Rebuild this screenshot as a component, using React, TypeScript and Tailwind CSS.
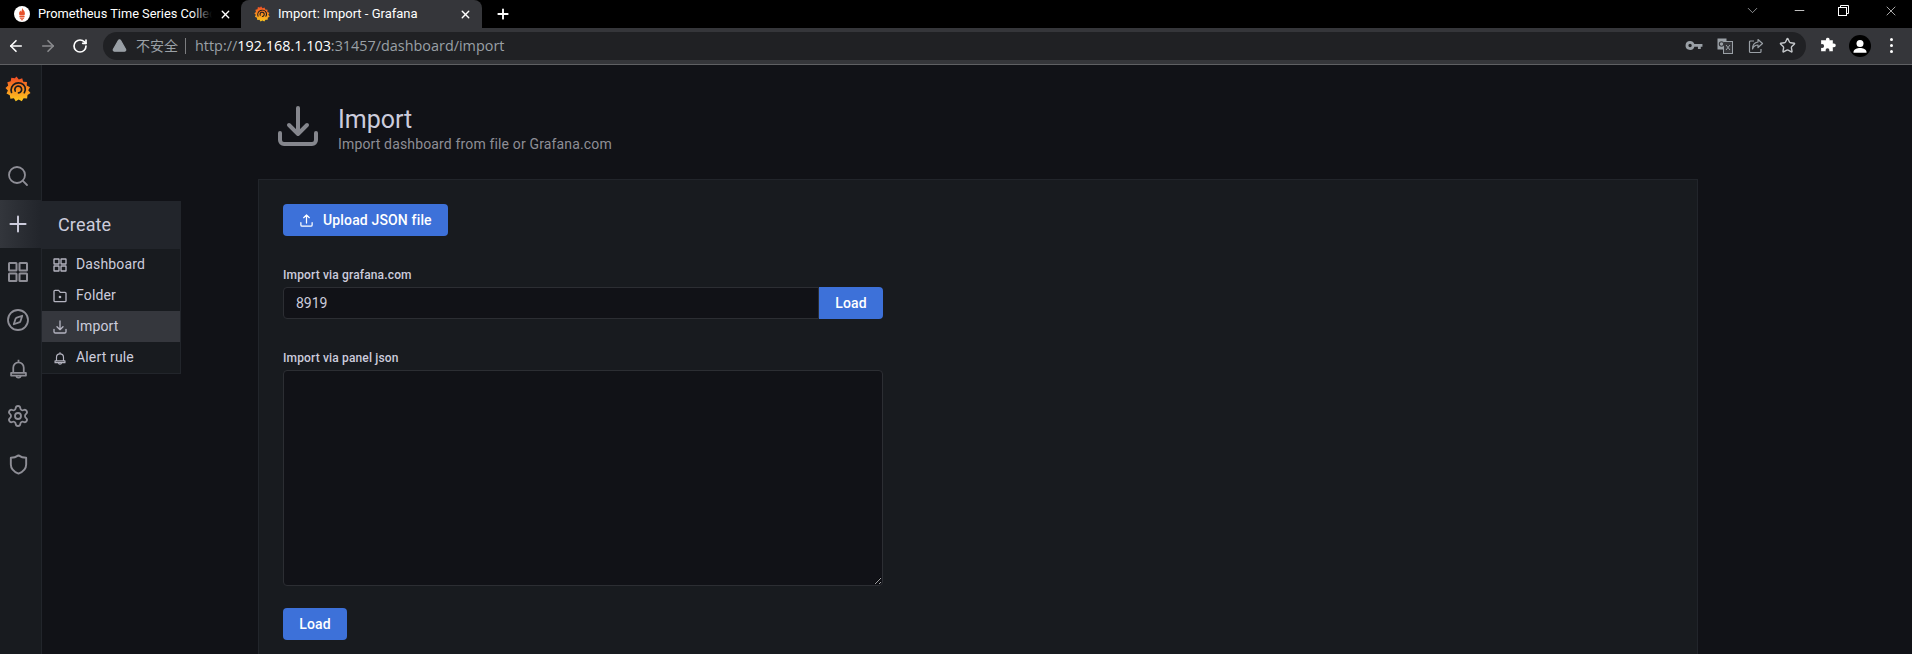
import React from 'react';
import {
  ArrowLeft,
  ArrowRight,
  ChevronDown,
  Compass,
  Minus,
  Plus,
  RotateCw,
  Search,
  Settings,
  Star,
  TriangleAlert,
  X,
} from 'lucide-react';

type IconProps = { className?: string };

const GrafanaLogo: React.FC<IconProps & { id: string }> = ({ className, id }) => (
  <svg viewBox="0 0 26 26" className={className}>
    <defs>
      <linearGradient id={id} x1="0.5" y1="1" x2="0.5" y2="0">
        <stop offset="0" stopColor="#fcc81f" />
        <stop offset="0.55" stopColor="#f9861f" />
        <stop offset="1" stopColor="#ef4a27" />
      </linearGradient>
    </defs>
    <path
      fill={`url(#${id})`}
      d="M11.500 0.500l2.300 3 3.400-1.200 1 3.400 3.800.2-.3 3.600 3.300 1.700-1.800 3 2.300 2.700-3 2-.4 3.600-3.500-.3-1.800 3-3.100-1.700-3 1.800-1.800-3-3.500.4-.6-3.500-3.300-1.600 1.400-3.200-2.400-2.500 2.700-2.300-.9-3.400 3.400-1 .6-3.500 3.500.6z"
    />
    <path d="M6.500 16.500A7.300 7.300 0 0 1 20 11c.6 2 .3 4-.7 5.700" fill="none" stroke="#181b1f" strokeWidth="1.700" strokeLinecap="round" />
    <path d="M10.200 15a3.400 3.400 0 1 1 3.300 1.900" fill="none" stroke="#181b1f" strokeWidth="1.700" strokeLinecap="round" />
  </svg>
);

const PrometheusLogo: React.FC<IconProps> = ({ className }) => (
  <svg viewBox="0 0 16 16" className={className}>
    <circle cx="8" cy="8" r="8" fill="#fff" />
    <path
      fill="#e6522c"
      d="M8 1.800c.5 1.700 2.900 3 2.900 5.600 0 .9-.3 1.500-.7 2H5.800c-.4-.5-.7-1.100-.7-2C5.100 6 6 5.500 6.300 4.500 6.800 5 7 5.500 7.100 6c.7-1 1.100-2.500.9-4.200zM5.400 10.100h5.200v1.100H5.400zM5.900 11.800h4.200v1H5.900zM6.900 13.300h2.200v.9H6.900z"
    />
  </svg>
);

const GridIcon: React.FC<IconProps> = ({ className }) => (
  <svg viewBox="0 0 24 24" fill="none" stroke="currentColor" strokeWidth="2" className={className}>
    <rect x="3" y="3" width="7.500" height="7.500" rx="0.5" />
    <rect x="13.500" y="3" width="7.500" height="7.500" rx="0.5" />
    <rect x="3" y="13.500" width="7.500" height="7.500" rx="0.5" />
    <rect x="13.500" y="13.500" width="7.500" height="7.500" rx="0.5" />
  </svg>
);

const BellIcon: React.FC<IconProps> = ({ className }) => (
  <svg viewBox="0 0 24 24" fill="none" stroke="currentColor" strokeWidth="2" strokeLinejoin="round" className={className}>
    <path d="M12 2v2M6 17V11a6 6 0 0 1 12 0v6" />
    <path d="M3.500 17h17v3h-17z" />
    <path d="M9.500 20a2.500 2.500 0 0 0 5 0" />
  </svg>
);

const ShieldIcon: React.FC<IconProps> = ({ className }) => (
  <svg viewBox="0 0 24 24" fill="none" stroke="currentColor" strokeWidth="2" strokeLinejoin="round" className={className}>
    <path d="M12 2.500c2.500 1.700 5 2.500 8 2.500v7c0 4.500-3 7.500-8 9.500-5-2-8-5-8-9.500V5c3 0 5.500-.8 8-2.500z" />
  </svg>
);

const ImportIcon: React.FC<IconProps> = ({ className }) => (
  <svg viewBox="0 0 24 24" fill="none" stroke="currentColor" strokeWidth="2" strokeLinecap="round" strokeLinejoin="round" className={className}>
    <path d="M12 3v13M7.500 11.500L12 16l4.500-4.500" />
    <path d="M3 15.500v3.500a2 2 0 0 0 2 2h14a2 2 0 0 0 2-2v-3.500" />
  </svg>
);

const UploadIcon: React.FC<IconProps> = ({ className }) => (
  <svg viewBox="0 0 24 24" fill="none" stroke="currentColor" strokeWidth="2" strokeLinecap="round" strokeLinejoin="round" className={className}>
    <path d="M12 16V3M7.500 7.500L12 3l4.500 4.500" />
    <path d="M3 15.500v3.500a2 2 0 0 0 2 2h14a2 2 0 0 0 2-2v-3.500" />
  </svg>
);

const FolderIcon: React.FC<IconProps> = ({ className }) => (
  <svg viewBox="0 0 24 24" fill="none" stroke="currentColor" strokeWidth="2" strokeLinejoin="round" className={className}>
    <path d="M3 5a1.500 1.500 0 0 1 1.500-1.500H10l2.500 3h7A1.500 1.500 0 0 1 21 8v11a1.500 1.500 0 0 1-1.500 1.500h-15A1.500 1.500 0 0 1 3 19z" />
    <circle cx="12" cy="13.500" r="1" fill="currentColor" />
  </svg>
);

const KeyIcon: React.FC<IconProps> = ({ className }) => (
  <svg viewBox="0 0 16 16" fill="currentColor" className={className}>
    <path d="M4.500 3.500a4 4 0 0 1 3.800 2.700H15.500v2.500h-1.500v2h-2.500v-2H8.300A4 4 0 1 1 4.500 3.500zm0 2.500a1.500 1.500 0 1 0 0 3 1.500 1.500 0 0 0 0-3z" />
  </svg>
);

const TranslateIcon: React.FC<IconProps> = ({ className }) => (
  <svg viewBox="0 0 16 16" className={className}>
    <rect x="0.500" y="0.500" width="9" height="11" fill="#9aa0a6" />
    <rect x="6.500" y="3.500" width="9" height="12" fill="#35363a" stroke="#9aa0a6" />
    <circle cx="4.500" cy="6" r="2.200" fill="none" stroke="#35363a" strokeWidth="1.100" />
    <path d="M9 7l4 5M13 7l-4 5" stroke="#9aa0a6" />
  </svg>
);

const ShareIcon: React.FC<IconProps> = ({ className }) => (
  <svg viewBox="0 0 16 16" fill="none" stroke="currentColor" strokeWidth="1.200" className={className}>
    <path d="M6 3H2.500A1 1 0 0 0 1.500 4v9.500a1 1 0 0 0 1 1H12a1 1 0 0 0 1-1V11" />
    <path d="M10 1.500L14.500 5.500 10 9.500V7C7 7 5.500 8.500 4.500 11c0-4 2-6.500 5.500-7z" strokeLinejoin="round" />
  </svg>
);

const PuzzleIcon: React.FC<IconProps> = ({ className }) => (
  <svg viewBox="0 0 16 16" fill="currentColor" className={className}>
    <path d="M6.500 2a1.800 1.800 0 0 1 3.500 0c0 .3-.1.600-.2 1h3.200v3.300c.3-.2.600-.3 1-.3a1.800 1.800 0 0 1 0 3.600c-.4 0-.7-.1-1-.3V13.500H9.500c.2-.3.300-.6.300-1a1.800 1.800 0 0 0-3.600 0c0 .4.100.7.300 1H2V10c.3.200.6.300 1 .3a1.800 1.800 0 0 0 0-3.600c-.4 0-.7.100-1 .3V3h4.700c-.1-.4-.2-.7-.2-1z" />
  </svg>
);

const AvatarIcon: React.FC<IconProps> = ({ className }) => (
  <svg viewBox="0 0 22 22" className={className}>
    <circle cx="11" cy="11" r="11" fill="#000" />
    <circle cx="11" cy="8.500" r="3.500" fill="#fff" />
    <path d="M4.500 17c0-2.800 3.800-4 6.500-4s6.500 1.200 6.500 4v.8h-13z" fill="#fff" />
  </svg>
);

const RestoreIcon: React.FC<IconProps> = ({ className }) => (
  <svg viewBox="0 0 11 11" fill="none" stroke="currentColor" strokeWidth="1" className={className}>
    <rect x="0.500" y="2.500" width="8" height="8" />
    <path d="M2.500 2.500v-2h8v8h-2" />
  </svg>
);

const TabBar: React.FC = () => (
  <div className="flex h-[28px] items-stretch bg-black text-white">
    <div className="flex w-[241px] items-center pl-[14px] pr-[9px]">
      <PrometheusLogo className="h-4 w-4 shrink-0" />
      <span className="relative ml-[8px] w-[175px] overflow-hidden whitespace-nowrap text-[12.800px]">
        Prometheus Time Series Collection
        <span className="absolute inset-y-0 right-0 w-[20px] bg-gradient-to-r from-transparent to-black" />
      </span>
      <X className="ml-[7px] h-[13px] w-[13px]" strokeWidth={2.5} />
    </div>
    <div className="flex w-[241px] items-center rounded-t-lg bg-[#35363a] pl-[13px] pr-[10px]">
      <GrafanaLogo id="grafanaTab" className="h-4 w-4 shrink-0" />
      <span className="ml-[8px] flex-1 whitespace-nowrap text-[13px]">Import: Import - Grafana</span>
      <X className="h-[13px] w-[13px]" strokeWidth={2.5} />
    </div>
    <div className="ml-[13px] flex items-center">
      <Plus className="h-[16px] w-[16px]" strokeWidth={2.8} />
    </div>
    <div className="ml-auto flex items-center pr-[13px] pb-[7px]">
      <ChevronDown className="mr-[31px] h-[17px] w-[17px] text-[#c4c7ca]" strokeWidth={1} />
      <Minus className="mr-[31px] h-[15px] w-[15px] text-white" strokeWidth={1.2} />
      <RestoreIcon className="mr-[34px] h-[11px] w-[11px] text-white" />
      <X className="h-[16px] w-[16px] text-white" strokeWidth={1} />
    </div>
  </div>
);

const AddressBar: React.FC = () => (
  <div className="flex h-[37px] items-center border-b border-[#5f6063] bg-[#35363a] pb-px">
    <div className="flex w-[103px] items-center pl-[7px]">
      <ArrowLeft className="h-[18px] w-[18px] text-white" strokeWidth={2.2} />
      <ArrowRight className="ml-[14px] h-[18px] w-[18px] text-[#8a8b8e]" strokeWidth={2.2} />
      <RotateCw className="ml-[15px] h-[16px] w-[16px] text-white" strokeWidth={2.5} />
    </div>
    <div className="flex h-[28px] w-[1703px] items-center rounded-full bg-[#202124] pl-[9px] pr-[10px]">
      <TriangleAlert className="h-[15px] w-[15px] fill-[#9aa0a6] text-[#9aa0a6]" />
      <span className="ml-[9px] font-['Noto_Sans_CJK_SC',sans-serif] text-[14px] text-[#9aa0a6]">不安全</span>
      <span className="ml-[7px] h-[16px] w-px bg-[#7c7d80]" />
      <span className="ml-[9px] font-['Open_Sans',sans-serif] text-[14.400px] text-[#9aa0a6]">
        http://<span className="text-white">192.168.1.103</span>:31457/dashboard/import
      </span>
      <div className="ml-auto flex items-center text-[#9aa0a6]">
        <KeyIcon className="h-[18px] w-[18px]" />
        <TranslateIcon className="ml-[14px] h-[16px] w-[16px]" />
        <ShareIcon className="ml-[15px] h-[16px] w-[16px]" />
        <Star className="ml-[15px] h-[17px] w-[17px] text-[#c4c7ca]" strokeWidth={2} />
      </div>
    </div>
    <div className="flex flex-1 items-center pl-[13px] text-white">
      <PuzzleIcon className="h-[17px] w-[17px]" />
      <AvatarIcon className="ml-[13px] h-[22px] w-[22px]" />
      <div className="ml-[19px] flex flex-col gap-[3px]">
        <span className="h-[3px] w-[3px] rounded-full bg-white" />
        <span className="h-[3px] w-[3px] rounded-full bg-white" />
        <span className="h-[3px] w-[3px] rounded-full bg-white" />
      </div>
    </div>
  </div>
);

const SideItem: React.FC<{ active?: boolean; children: React.ReactNode }> = ({ active, children }) => (
  <div
    className={
      active
        ? 'flex h-[48px] items-center justify-center bg-gradient-to-r from-[#33363c] to-[#22252b] pr-[5px] text-[#ccccdc]'
        : 'flex h-[48px] items-center justify-center pr-[5px] text-[#8e8e96]'
    }
  >
    {children}
  </div>
);

const Sidebar: React.FC = () => (
  <aside className="flex w-[42px] shrink-0 flex-col border-r border-[#22252b] bg-[#181b1f]">
    <div className="flex h-[48px] items-center justify-center pr-[5px]">
      <GrafanaLogo id="grafanaSide" className="h-[26px] w-[26px]" />
    </div>
    <div className="h-[39px]" />
    <SideItem>
      <Search className="h-[24px] w-[24px]" strokeWidth={1.800} />
    </SideItem>
    <SideItem active>
      <Plus className="h-[26px] w-[26px]" strokeWidth={1.800} />
    </SideItem>
    <SideItem>
      <GridIcon className="h-[24px] w-[24px]" />
    </SideItem>
    <SideItem>
      <Compass className="h-[24px] w-[24px]" strokeWidth={1.800} />
    </SideItem>
    <SideItem>
      <BellIcon className="h-[21px] w-[21px]" />
    </SideItem>
    <SideItem>
      <Settings className="h-[24px] w-[24px]" strokeWidth={1.800} />
    </SideItem>
    <SideItem>
      <ShieldIcon className="h-[23px] w-[23px]" />
    </SideItem>
  </aside>
);

const FlyoutItem: React.FC<{ icon: React.ReactNode; label: string; active?: boolean }> = ({ icon, label, active }) => (
  <div className={active ? 'flex h-[31px] items-center bg-[#35373d] pl-[10px] text-[14px]' : 'flex h-[31px] items-center pl-[10px] text-[14px]'}>
    <span className="flex w-[16px] items-center justify-center text-[#b4b4c0]">{icon}</span>
    <span className="ml-[8px]">{label}</span>
  </div>
);

const CreateMenu: React.FC = () => (
  <div className="absolute left-[41px] top-[136px] w-[140px] tracking-[0.150px] text-[#ccccdc]">
    <div className="flex h-[48px] items-center bg-[#22252b] pb-[2px] pl-[17px] text-[18px]">Create</div>
    <div className="border border-t-0 border-[#22252b] bg-[#181b1f]">
      <FlyoutItem icon={<GridIcon className="h-[16px] w-[16px]" />} label="Dashboard" />
      <FlyoutItem icon={<FolderIcon className="h-[16px] w-[16px]" />} label="Folder" />
      <FlyoutItem icon={<ImportIcon className="h-[16px] w-[16px]" />} label="Import" active />
      <FlyoutItem icon={<BellIcon className="h-[14px] w-[14px]" />} label="Alert rule" />
    </div>
  </div>
);

const App: React.FC = () => {
  return (
    <div className="flex h-[654px] w-[1912px] flex-col overflow-hidden bg-[#111217] font-['Roboto',sans-serif]">
      <TabBar />
      <AddressBar />
      <div className="relative flex flex-1 overflow-hidden">
        <Sidebar />
        <CreateMenu />
        <main className="ml-[216px] w-[1440px]">
          <header className="flex h-[114px] items-start pl-[16px]">
            <ImportIcon className="mt-[37px] h-[48px] w-[48px] text-[#85868d]" />
            <div className="ml-[16px] mt-[40px]">
              <h1 className="text-[25px] leading-[29px] text-[#ccccdc]">Import</h1>
              <p className="text-[14px] leading-[20px] tracking-[0.150px] text-[#8e8e96]">Import dashboard from file or Grafana.com</p>
            </div>
          </header>
          <section className="h-[600px] border border-[#22252b] bg-[#181b1f] pl-[24px] pt-[24px]">
            <button className="flex h-[32px] w-[165px] items-center rounded-sm bg-[#3d71d9] pl-[16px] text-[14px] font-medium tracking-[0.150px] text-white">
              <UploadIcon className="h-[15px] w-[15px]" />
              <span className="ml-[9px]">Upload JSON file</span>
            </button>
            <label className="mt-[29px] block text-[12px] font-medium leading-[20px] tracking-[0.150px] text-[#ccccdc]">Import via grafana.com</label>
            <div className="mt-[2px] flex w-[600px]">
              <input
                readOnly
                value="8919"
                className="h-[32px] w-[536px] rounded-l-sm border border-[#2c2e33] bg-[#111217] px-[12px] text-[14px] text-[#ccccdc] outline-none"
              />
              <button className="h-[32px] w-[64px] rounded-r-sm bg-[#3d71d9] text-[14px] font-medium tracking-[0.150px] text-white">Load</button>
            </div>
            <label className="mt-[29px] block text-[12px] font-medium leading-[20px] tracking-[0.150px] text-[#ccccdc]">Import via panel json</label>
            <textarea
              readOnly
              className="mt-[2px] block h-[216px] w-[600px] rounded-sm border border-[#2c2e33] bg-[#111217] outline-none"
            />
            <button className="mt-[22px] block h-[32px] w-[64px] rounded-sm bg-[#3d71d9] text-[14px] font-medium tracking-[0.150px] text-white">Load</button>
          </section>
        </main>
      </div>
    </div>
  );
};

export default App;
